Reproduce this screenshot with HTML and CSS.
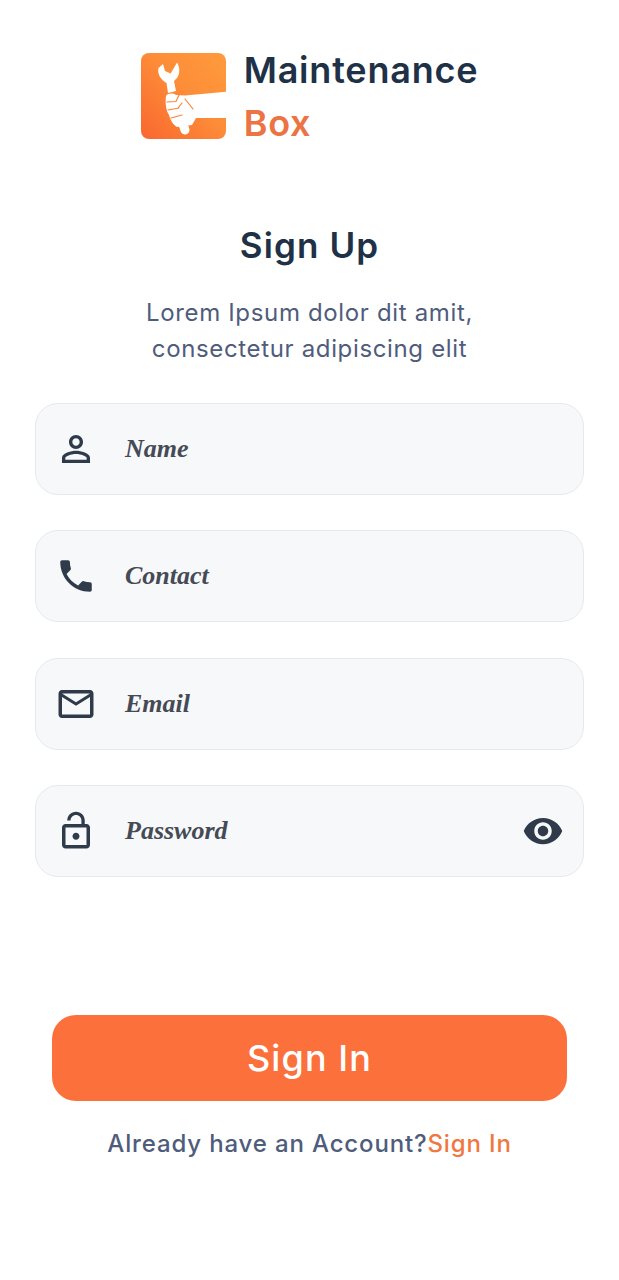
FILE: index.html
```html
<!DOCTYPE html>
<html lang="en">
<head>
<meta charset="utf-8">
<title>Sign Up</title>
<link rel="stylesheet" href="styles.css">
</head>
<body>
<main class="page">
  <header class="brand">
    <svg class="brand-logo" viewBox="0 0 85 86" aria-hidden="true">
      <defs>
        <linearGradient id="lg" x1="0" y1="1" x2="1" y2="0">
          <stop offset="0" stop-color="#f9662f"/>
          <stop offset="0.55" stop-color="#fd8d38"/>
          <stop offset="1" stop-color="#ff9b3c"/>
        </linearGradient>
      </defs>
      <rect width="85" height="86" rx="8" fill="url(#lg)"/>
      <path fill="#fff" d="M17.5 15L22 11L24 18L29.5 20.5L33.5 14L36 9.5C39 14 39 21 36 25L33 28L35 38L27 40L25.5 30C20 27 16 21 17.5 15Z"/>
      <path fill="none" stroke="#fff" stroke-width="9" stroke-linecap="round" d="M35 50L44 77"/>
      <path fill="#fff" d="M25 43C27 40 32 40 35 42L44 42.5L85 38.7V65H55L51 72L36 74C32 72 29 66 28 62C25 58 24 50 25 43Z"/>
      <path fill="none" stroke="#f7843a" stroke-width="1.2" stroke-linecap="round" d="M26 49L35 48.5L38 42M27 57L38 55M30 65L41 62M44 46L52 56M41 50L37 55"/>
    </svg>
    <div class="brand-name">
      <span class="brand-main">Maintenance</span>
      <span class="brand-sub">Box</span>
    </div>
  </header>

  <h1 class="title">Sign Up</h1>
  <p class="lead">Lorem Ipsum dolor dit amit,<br>consectetur adipiscing elit</p>

  <form class="fields">
    <label class="field">
      <svg class="icon" viewBox="0 0 24 24" aria-hidden="true"><path d="M12 5.9c1.16 0 2.1.94 2.1 2.1s-.94 2.1-2.1 2.1S9.9 9.16 9.9 8s.94-2.1 2.1-2.1m0 9c2.97 0 6.1 1.46 6.1 2.1v1.1H5.9V17c0-.64 3.13-2.1 6.1-2.1M12 4C9.79 4 8 5.79 8 8s1.79 4 4 4 4-1.79 4-4-1.79-4-4-4zm0 9c-2.67 0-8 1.34-8 4v3h16v-3c0-2.66-5.33-4-8-4z"/></svg>
      <span class="placeholder">Name</span>
    </label>
    <label class="field">
      <svg class="icon" viewBox="0 0 24 24" aria-hidden="true"><path d="M6.62 10.79c1.44 2.83 3.76 5.14 6.59 6.59l2.2-2.2c.27-.27.67-.36 1.02-.24 1.12.37 2.33.57 3.57.57.55 0 1 .45 1 1V20c0 .55-.45 1-1 1-9.39 0-17-7.61-17-17 0-.55.45-1 1-1h3.5c.55 0 1 .45 1 1 0 1.25.2 2.45.57 3.57.11.35.03.74-.25 1.02l-2.2 2.2z"/></svg>
      <span class="placeholder">Contact</span>
    </label>
    <label class="field">
      <svg class="icon" viewBox="0 0 24 24" aria-hidden="true"><path d="M20 4H4c-1.1 0-1.99.9-1.99 2L2 18c0 1.1.9 2 2 2h16c1.1 0 2-.9 2-2V6c0-1.1-.9-2-2-2zm0 14H4V8l8 5 8-5v10zm-8-7L4 6h16l-8 5z"/></svg>
      <span class="placeholder">Email</span>
    </label>
    <label class="field">
      <svg class="icon" viewBox="0 0 24 24" aria-hidden="true"><path d="M12 17c1.1 0 2-.9 2-2s-.9-2-2-2-2 .9-2 2 .9 2 2 2zm6-9h-1V6c0-2.76-2.24-5-5-5S7 3.24 7 6h1.9c0-1.71 1.39-3.1 3.1-3.1 1.71 0 3.1 1.39 3.1 3.1v2H6c-1.1 0-2 .9-2 2v10c0 1.1.9 2 2 2h12c1.1 0 2-.9 2-2V10c0-1.1-.9-2-2-2zm0 12H6V10h12v10z"/></svg>
      <span class="placeholder">Password</span>
      <svg class="icon icon-end" viewBox="0 0 24 24" aria-hidden="true"><path d="M12 4.5C7 4.5 2.73 7.61 1 12c1.73 4.39 6 7.5 11 7.5s9.27-3.11 11-7.5c-1.73-4.39-6-7.5-11-7.5zM12 17c-2.76 0-5-2.24-5-5s2.24-5 5-5 5 2.24 5 5-2.24 5-5 5zm0-8c-1.66 0-3 1.34-3 3s1.34 3 3 3 3-1.34 3-3-1.34-3-3-3z"/></svg>
    </label>
  </form>

  <button class="submit" type="button">Sign In</button>
  <p class="switch">Already have an Account?<a class="switch-link" href="#">Sign In</a></p>
</main>
</body>
</html>
```
FILE: styles.css
```css
* { box-sizing: border-box; }
html, body { margin: 0; background: #fff; }
body { font-family: Inter, "Open Sans", sans-serif; }
.page { width: 619px; height: 1280px; padding: 53px 35px 0; display: flex; flex-direction: column; align-items: center; overflow: hidden; }
.brand { display: flex; align-items: flex-start; gap: 18px; }
.brand-logo { width: 85px; height: 86px; flex: none; }
.brand-name { display: flex; flex-direction: column; margin-top: -9px; font-size: 36px; font-weight: 600; line-height: 53px; letter-spacing: 0.8px; }
.brand-main { color: #1e3146; }
.brand-sub { color: #ec7343; }
.title { margin: 73px 0 0; font-size: 35px; line-height: 44px; font-weight: 600; letter-spacing: 1.1px; color: #1e3146; }
.lead { margin: 28px 0 0; font-size: 24px; line-height: 36px; font-weight: 400; letter-spacing: 0.65px; color: #4f5c7c; text-align: center; }
.fields { width: 549px; margin-top: 36.3px; display: flex; flex-direction: column; gap: 35.2px; }
.field { height: 92px; padding: 0 19px; display: flex; align-items: center; gap: 28px; background: #f7f8fa; border: 1.5px solid #e6e9ed; border-radius: 23px; }
.icon { width: 42px; height: 42px; flex: none; fill: #2f3b4a; }
.icon-end { margin-left: auto; margin-right: 0; }
.placeholder { font-family: "Liberation Serif", serif; font-style: italic; font-weight: 700; font-size: 26px; color: #454a55; }
.submit { width: 515px; height: 86px; margin-top: 137.7px; border: 0; border-radius: 24px; background: #fc703b; color: #fff; font-family: inherit; font-size: 36px; font-weight: 500; letter-spacing: 1.1px; }
.switch { margin: 26px 0 0; font-size: 24px; line-height: 34px; font-weight: 500; letter-spacing: 0.85px; color: #4f5c7c; }
.switch-link { color: #f0773f; text-decoration: none; }
```
